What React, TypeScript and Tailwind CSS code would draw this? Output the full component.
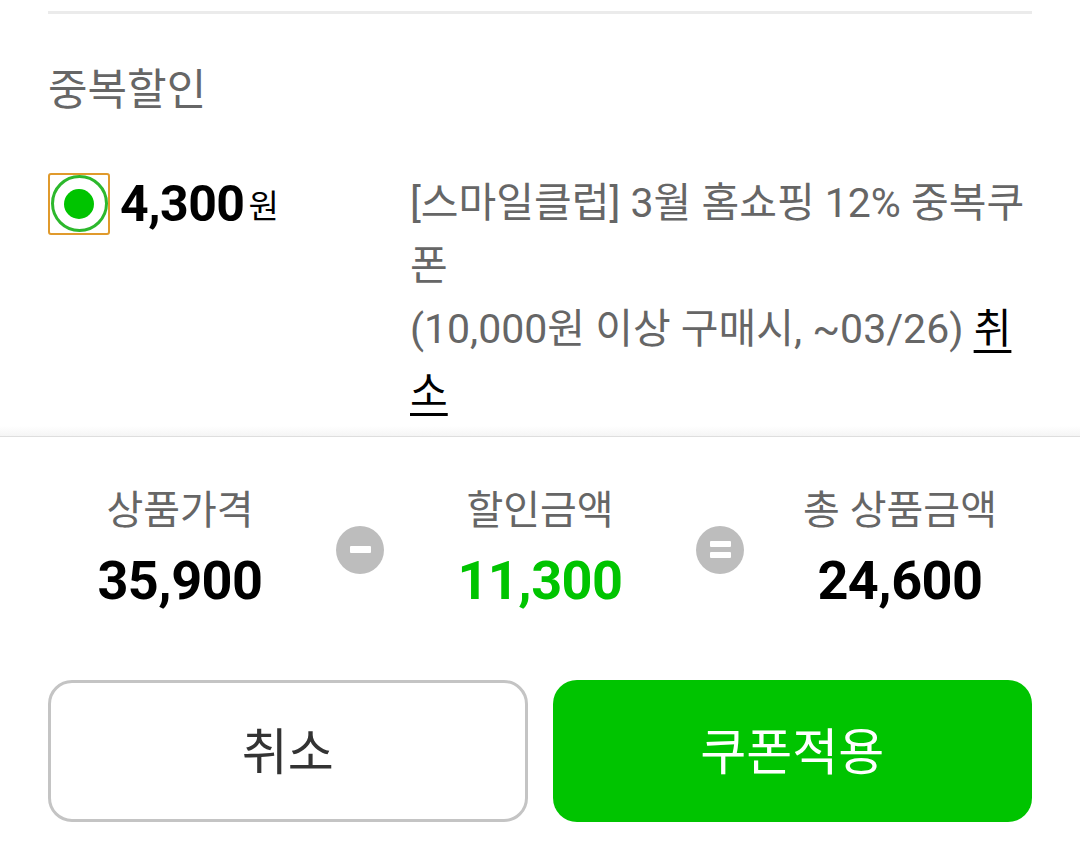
const FONT = "font-['Roboto','Noto_Sans_CJK_KR',sans-serif]";

function MinusIcon() {
  return (
    <div className="flex h-[48px] w-[48px] shrink-0 items-center justify-center rounded-full bg-[#bdbdbd]">
      <div className="h-[7px] w-[21px] rounded-[1px] bg-white" />
    </div>
  );
}

function EqualIcon() {
  return (
    <div className="flex h-[48px] w-[48px] shrink-0 flex-col items-center justify-center gap-[5px] rounded-full bg-[#bdbdbd]">
      <div className="h-[6px] w-[21px] rounded-[1px] bg-white" />
      <div className="h-[6px] w-[21px] rounded-[1px] bg-white" />
    </div>
  );
}

function Summary({ label, value, green }: { label: string; value: string; green?: boolean }) {
  return (
    <div className="flex flex-col items-center">
      <span className="text-[40px] leading-[46px] text-[#666]">{label}</span>
      <span
        className={`mt-[17px] text-[54px] font-bold leading-[60px] tracking-[-0.5px] ${
          green ? "text-[#00c400]" : "text-black"
        }`}
      >
        {value}
      </span>
    </div>
  );
}

export default function App() {
  return (
    <div className={`${FONT} w-[1080px] h-[847px] bg-white overflow-hidden`}>
      {/* Coupon section */}
      <div className="px-12">
        <div className="mt-[11px] h-[3px] bg-[#ebebeb]" />
        <h2 className="mt-[50px] text-[43px] leading-[52px] text-[#666]">중복할인</h2>

        <div className="mt-[56px] flex">
          <div className="flex h-[63px] w-[362px] shrink-0 items-center">
            <div className="flex h-[62px] w-[62px] items-center justify-center rounded-[3px] border-2 border-[#e09a2c]">
              <div className="flex h-[57px] w-[57px] items-center justify-center rounded-full border-[3px] border-[#2cb82c] bg-white">
                <div className="h-[30px] w-[30px] rounded-full bg-[#00c400]" />
              </div>
            </div>
            <span className="ml-[10px] text-[50px] font-bold leading-none tracking-[-0.5px] text-black">4,300</span>
            <span className="ml-[4px] mt-[6px] text-[33px] leading-none text-black">원</span>
          </div>

          <p className="whitespace-nowrap text-[41px] leading-[63px] text-[#666]">
            [스마일클럽] 3월 홈쇼핑 12% 중복쿠
            <br />폰
            <br />
            (10,000원 이상 구매시, ~03/26){" "}
            <a className="text-black underline decoration-[3px] underline-offset-[7px]">
              취<br />소
            </a>
          </p>
        </div>
      </div>

      {/* Summary section */}
      <div className="mt-[2px] h-[10px] bg-gradient-to-b from-transparent to-black/[0.04]" />
      <div className="h-px bg-[#dedede]" />

      <div className="grid grid-cols-[1fr_0px_1fr_0px_1fr] items-center pt-[51px]">
        <Summary label="상품가격" value="35,900" />
        <div className="flex justify-center">
          <MinusIcon />
        </div>
        <Summary label="할인금액" value="11,300" green />
        <div className="flex justify-center">
          <EqualIcon />
        </div>
        <Summary label="총 상품금액" value="24,600" />
      </div>

      {/* Buttons */}
      <div className="mt-[69px] grid grid-cols-2 gap-[25px] px-12">
        <button className="flex h-[142px] items-center justify-center rounded-[24px] border-[3px] border-[#c4c4c4] bg-white pt-[4px] text-[50px] text-[#333]">
          취소
        </button>
        <button className="flex h-[142px] items-center justify-center rounded-[24px] bg-[#00c400] pt-[4px] text-[50px] text-white">
          쿠폰적용
        </button>
      </div>
    </div>
  );
}
